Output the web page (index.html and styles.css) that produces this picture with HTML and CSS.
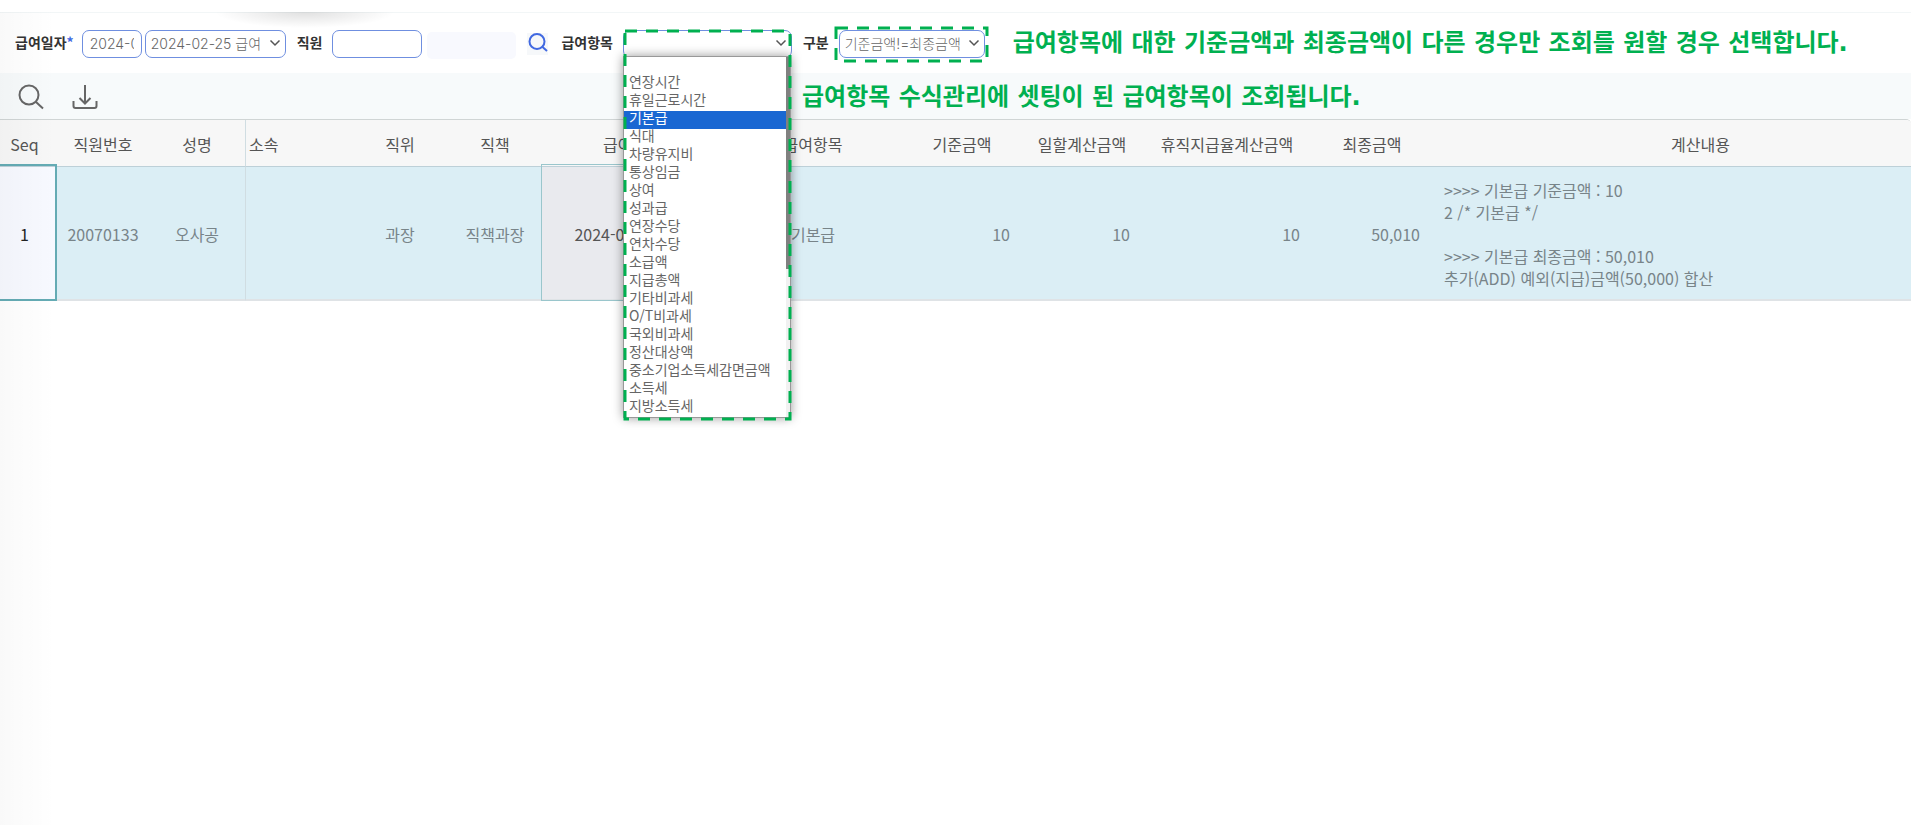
FILE: index.html
```
<!DOCTYPE html>
<html lang="ko">
  <head>
    <meta charset="utf-8">
    <meta name="viewport" content="width=device-width, initial-scale=1">
    <title>급여계산내역</title>
    <link rel="stylesheet" href="styles.css">
  </head>

  <body>
    <div class="page">
      <div class="tabshadow"></div>

      <form class="filter">
        <label class="label first" for="payYm">급여일자<span class="req">*</span></label>
        <input class="box ym" type="text" id="payYm" value="2024-02">
        <div class="combo payday">
          <select class="box" id="payDay" aria-label="급여일자 선택">
            <option>2024-02-25 급여</option>
          </select>
          <svg class="arrow" viewBox="0 0 12 8"><path d="M1.500 1.500 L6 6 L10.500 1.500"/></svg>
        </div>

        <label class="label" for="empNo">직원</label>
        <input class="box emp" type="text" id="empNo">
        <input class="empname" type="text" aria-label="직원명" readonly>
        <button class="find" type="button" aria-label="직원 찾기">
          <svg viewBox="0 0 21 22"><circle cx="10" cy="8.500" r="7.500"/><path d="M15 13.500 L20 18"/></svg>
        </button>

        <label class="label" for="payItem">급여항목</label>
        <div class="combo item">
          <select class="box" id="payItem">
            <option></option>
          </select>
          <svg class="arrow" viewBox="0 0 12 8"><path d="M1.500 1.500 L6 6 L10.500 1.500"/></svg>
          <div class="list">
            <ul role="listbox" aria-label="급여항목">
              <li role="option"></li>
              <li role="option">연장시간</li>
              <li role="option">휴일근로시간</li>
              <li role="option" class="on" aria-selected="true">기본급</li>
              <li role="option">식대</li>
              <li role="option">차량유지비</li>
              <li role="option">통상임금</li>
              <li role="option">상여</li>
              <li role="option">성과급</li>
              <li role="option">연장수당</li>
              <li role="option">연차수당</li>
              <li role="option">소급액</li>
              <li role="option">지급총액</li>
              <li role="option">기타비과세</li>
              <li role="option">O/T비과세</li>
              <li role="option">국외비과세</li>
              <li role="option">정산대상액</li>
              <li role="option">중소기업소득세감면금액</li>
              <li role="option">소득세</li>
              <li role="option">지방소득세</li>
            </ul>
            <div class="track"><div class="thumb"></div></div>
          </div>
          <svg class="mark markitem"><rect width="100%" height="100%"/></svg>
        </div>

        <label class="label" for="gubun">구분</label>
        <div class="combo gubun">
          <select class="box" id="gubun">
            <option>기준금액!=최종금액</option>
          </select>
          <svg class="arrow" viewBox="0 0 12 8"><path d="M1.500 1.500 L6 6 L10.500 1.500"/></svg>
          <svg class="mark markgubun"><rect width="100%" height="100%"/></svg>
        </div>

        <p class="note">급여항목에 대한 기준금액과 최종금액이 다른 경우만 조회를 원할 경우 선택합니다.</p>
      </form>

      <div class="toolbar">
        <button class="tool" type="button" aria-label="조회">
          <svg viewBox="0 0 26 26"><circle cx="11" cy="11" r="9.500"/><path d="M18 18 L25 24.500"/></svg>
        </button>
        <button class="tool" type="button" aria-label="다운로드">
          <svg viewBox="0 0 26 26"><path d="M13 1 V19 M7.500 14 L13 19.500 L18.500 14 M1.500 17 V22 Q1.500 24 3.500 24 H22.500 Q24.500 24 24.500 22 V17"/></svg>
        </button>
        <p class="note">급여항목 수식관리에 셋팅이 된 급여항목이 조회됩니다.</p>
      </div>

      <div class="grid">
        <table>
          <colgroup>
            <col class="c-seq"><col class="c-no"><col class="c-name"><col class="c-dept">
            <col class="c-rank"><col class="c-duty"><col class="c-day"><col class="c-item">
            <col class="c-amt"><col class="c-amt"><col class="c-rate"><col class="c-amt"><col>
          </colgroup>
          <thead>
            <tr>
              <th class="seq">Seq</th>
              <th>직원번호</th>
              <th class="fix">성명</th>
              <th class="dept">소속</th>
              <th>직위</th>
              <th>직책</th>
              <th>급여일자</th>
              <th>급여항목</th>
              <th>기준금액</th>
              <th>일할계산금액</th>
              <th>휴직지급율계산금액</th>
              <th>최종금액</th>
              <th>계산내용</th>
            </tr>
          </thead>
          <tbody>
            <tr>
              <td class="seq">1</td>
              <td>20070133</td>
              <td class="fix">오사공</td>
              <td></td>
              <td>과장</td>
              <td>직책과장</td>
              <td class="cur">2024-02-25 급여</td>
              <td>기본급</td>
              <td class="num">10</td>
              <td class="num">10</td>
              <td class="num">10</td>
              <td class="num">50,010</td>
              <td class="memo">&gt;&gt;&gt;&gt; 기본급 기준금액 : 10<br>2 /* 기본급 */<br><br>&gt;&gt;&gt;&gt; 기본급 최종금액 : 50,010<br>추가(ADD) 예외(지급)금액(50,000) 합산</td>
            </tr>
          </tbody>
        </table>
      </div>
    </div>
  </body>
</html>
```
FILE: styles.css
```
* {
box-sizing: border-box;
}

body {
margin: 0;
background: #fff;
color: #555;
font-family: "Noto Sans CJK KR", sans-serif;
font-size: 14px;
}

.page {
position: relative;
min-height: 100vh;
padding-top: 12px;
overflow: hidden;
}

/* Soft shade down the left side */
.page::after {
content: "";
position: absolute;
left: 0;
top: 12px;
bottom: 0;
width: 56px;
background: linear-gradient(to right, rgba(0,0,0,.025), rgba(0,0,0,0));
pointer-events: none;
}

.tabshadow {
position: absolute;
left: 215px;
top: 12px;
width: 180px;
height: 16px;
background: radial-gradient(ellipse 50% 100% at 50% 0, rgba(0,0,0,.12), rgba(0,0,0,0));
}

/* Search conditions */
.filter {
display: flex;
align-items: flex-start;
height: 61px;
padding: 17px 0 0 4px;
border-top: 1px solid #f2f6f7;
}

.label {
flex: none;
padding: 0 10px 0 11px;
line-height: 24px;
font-weight: bold;
color: #333;
}

.first {
padding-right: 8px;
}

.req {
color: #4169e1;
}

.box {
width: 100%;
height: 28px;
margin: 0;
padding: 0 6px 2px;
border: 1px solid #6f8fe0;
border-radius: 7px;
background: #fff;
color: #666;
font-family: Inter, "Noto Sans CJK KR", sans-serif;
font-size: 14px;
font-weight: 300;
appearance: none;
}

.payday .box,
.gubun .box {
padding-left: 5px;
}

.ym {
flex: none;
width: 60px;
padding: 0 7px 2px;
}

.emp {
flex: none;
width: 90px;
}

.empname {
flex: none;
width: 89px;
height: 27px;
margin: 2px 11px 0 5px;
border: 0;
border-radius: 5px;
background: #f8f9fe;
}

.find {
flex: none;
width: 21px;
height: 22px;
margin: 3px 2px 0 0;
padding: 0;
border: 0;
background: #f6f8fa;
}

.find svg {
display: block;
width: 21px;
height: 22px;
fill: none;
stroke: #4169e1;
stroke-width: 2;
}

.combo {
position: relative;
flex: none;
}

.payday {
width: 141px;
margin-left: 3px;
}

.item {
width: 169px;
}

.gubun {
width: 146px;
}

.arrow {
position: absolute;
right: 5px;
top: 9px;
width: 12px;
height: 8px;
fill: none;
stroke: #555;
stroke-width: 1.5;
pointer-events: none;
}

/* Opened item list */
.list {
position: absolute;
z-index: 2;
left: 0;
top: 26px;
display: flex;
width: 168px;
border: 1px solid #999;
background: #fff;
box-shadow: 0 0 10px rgba(0,0,0,.4);
}

.list ul {
flex: 1;
margin: 0;
padding: 0;
list-style: none;
}

.list li {
height: 18px;
padding-left: 5px;
line-height: 13px;
color: #666;
}

.list .on {
background: #1967d2;
color: #fff;
}

.track {
width: 4px;
background: #f1f1f1;
}

.thumb {
height: 212px;
background: #808080;
}

/* Dashed guide boxes */
.mark {
position: absolute;
z-index: 3;
overflow: visible;
fill: none;
stroke: #00b050;
stroke-width: 3;
stroke-dasharray: 12 9;
pointer-events: none;
}

.markitem {
left: 2px;
top: 1px;
width: 165px;
height: 388px;
}

.markgubun {
left: -3px;
top: -2px;
width: 151px;
height: 33px;
}

.note {
flex: none;
margin: 0 0 0 28px;
font-family: "DejaVu Sans", "Noto Sans CJK KR", sans-serif;
font-size: 24px;
font-weight: bold;
line-height: 26px;
color: #00b050;
}

/* Toolbar */
.toolbar {
display: flex;
align-items: center;
gap: 28px;
height: 46px;
padding: 2px 0 0 18px;
background: #f7fafb;
}

.toolbar .note {
margin-left: 676px;
}

.tool {
flex: none;
width: 26px;
height: 26px;
padding: 0;
border: 0;
background: none;
}

.tool svg {
display: block;
width: 26px;
height: 26px;
fill: none;
stroke: #666;
stroke-width: 2;
}

/* Grid */
.grid {
overflow: hidden;
border-top: 1px solid #d0d5d5;
border-radius: 0 5px 0 0;
}

table {
width: 1969px;
border-collapse: separate;
border-spacing: 0;
table-layout: fixed;
font-size: 16px;
}

.c-seq { width: 57px; }
.c-no { width: 92px; }
.c-name { width: 97px; }
.c-dept { width: 105px; }
.c-rank { width: 98px; }
.c-duty { width: 92px; }
.c-day { width: 183px; }
.c-item { width: 178px; }
.c-amt { width: 120px; }
.c-rate { width: 170px; }

th {
height: 47px;
padding: 2px 0 0;
border-bottom: 1px solid #bdd0d8;
background: #f7f7f7;
color: #555;
font-weight: normal;
text-align: center;
}

th.dept {
padding-left: 3px;
text-align: left;
}

.fix {
border-right: 1px solid #d0dde2;
}

td {
height: 134px;
padding: 1px 0 0;
border-bottom: 2px solid #dfe3e6;
background: #dbeef5;
color: #788489;
line-height: 22px;
text-align: center;
}

.seq {
padding-right: 8px;
}

td.seq {
position: relative;
background: #f7f9ff;
color: #222;
}

td.seq::after {
content: "";
position: absolute;
left: -2px;
right: 0;
top: -3px;
bottom: -2px;
border: 2px solid #64abb4;
}

td.cur {
position: relative;
background: #e9eaee;
color: #555;
}

td.cur::after {
content: "";
position: absolute;
left: 0;
right: 0;
top: -3px;
bottom: -2px;
border: 1px solid #9ac6cc;
}

td.num {
padding-right: 12px;
text-align: right;
}

td.memo {
padding-left: 12px;
text-align: left;
}
```
